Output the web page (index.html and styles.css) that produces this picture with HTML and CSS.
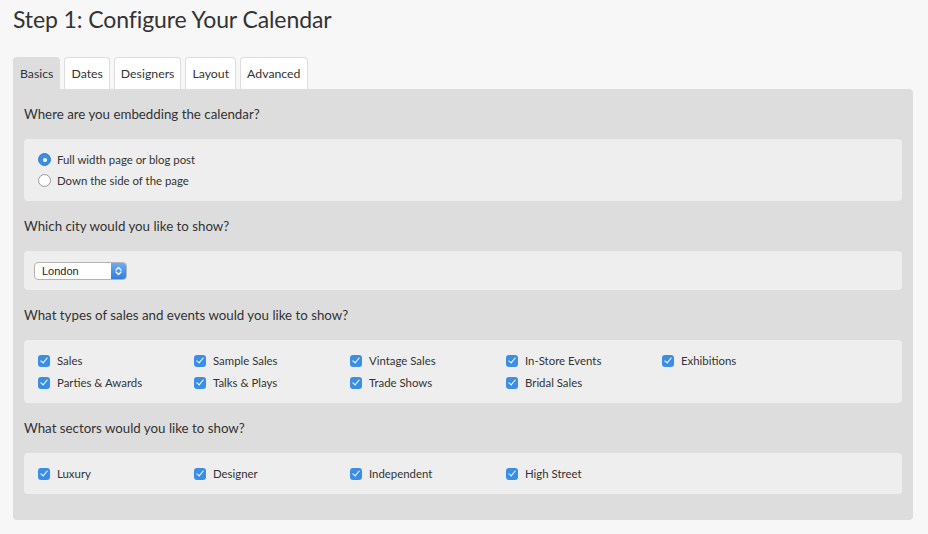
FILE: index.html
```html
<!DOCTYPE html>
<html>
<head>
<meta charset="utf-8">
<link rel="stylesheet" href="styles.css">
</head>
<body>
<div class="page">
  <h1 class="title">Step 1: Configure Your Calendar</h1>
  <ul class="tabs">
    <li class="tab active">Basics</li>
    <li class="tab">Dates</li>
    <li class="tab">Designers</li>
    <li class="tab">Layout</li>
    <li class="tab">Advanced</li>
  </ul>
  <div class="panel">
    <div class="question">Where are you embedding the calendar?</div>
    <div class="box list">
      <label class="opt"><span class="radio on"></span>Full width page or blog post</label>
      <label class="opt"><span class="radio"></span>Down the side of the page</label>
    </div>

    <div class="question">Which city would you like to show?</div>
    <div class="box select-box">
      <div class="select"><span class="select-text">London</span><span class="select-btn"><svg width="9" height="12" viewBox="0 0 9 12"><path d="M2 5 L4.5 2.5 L7 5 M2 7 L4.5 9.5 L7 7" fill="none" stroke="#fff" stroke-width="1.3" stroke-linecap="round" stroke-linejoin="round"/></svg></span></div>
    </div>

    <div class="question">What types of sales and events would you like to show?</div>
    <div class="box grid">
      <label class="opt"><span class="check"></span>Sales</label>
      <label class="opt"><span class="check"></span>Sample Sales</label>
      <label class="opt"><span class="check"></span>Vintage Sales</label>
      <label class="opt"><span class="check"></span>In-Store Events</label>
      <label class="opt"><span class="check"></span>Exhibitions</label>
      <label class="opt"><span class="check"></span>Parties &amp; Awards</label>
      <label class="opt"><span class="check"></span>Talks &amp; Plays</label>
      <label class="opt"><span class="check"></span>Trade Shows</label>
      <label class="opt"><span class="check"></span>Bridal Sales</label>
    </div>

    <div class="question">What sectors would you like to show?</div>
    <div class="box grid">
      <label class="opt"><span class="check"></span>Luxury</label>
      <label class="opt"><span class="check"></span>Designer</label>
      <label class="opt"><span class="check"></span>Independent</label>
      <label class="opt"><span class="check"></span>High Street</label>
    </div>
  </div>
</div>
</body>
</html>
```

FILE: styles.css
```css
* { box-sizing: border-box; }
html, body { margin: 0; padding: 0; background: #f7f7f7; }
body {
  font-family: Lato, "Open Sans", sans-serif;
  color: #333;
}
.page {
  padding: 4px 15px 0 13px;
}
.title {
  margin: 0;
  font-weight: 400;
  font-size: 23px;
  line-height: 30px;
  color: #333;
  letter-spacing: -0.1px;
}
.tabs {
  list-style: none;
  margin: 23px 0 0 0;
  padding: 0;
  display: flex;
  gap: 4px;
}
.tab {
  height: 32px;
  line-height: 31px;
  padding: 0 6px;
  font-size: 12.3px;
  background: #fff;
  border: 1px solid #ddd;
  border-bottom: none;
  border-radius: 4px 4px 0 0;
  color: #333;
}
.tab.active {
  background: #ddd;
  border-color: #ddd;
}
.panel {
  background: #ddd;
  border-radius: 0 4px 4px 4px;
  padding: 14px 11px 26px 11px;
}
.question {
  font-size: 13.3px;
  line-height: 22px;
  color: #333;
  margin-bottom: 14px;
}
.box + .question { margin-top: 14px; }
.box {
  background: #eee;
  border-radius: 4px;
  padding: 10px 14px;
}
.list {
  display: flex;
  flex-direction: column;
}
.grid {
  display: grid;
  grid-template-columns: repeat(5, 156px);
  row-gap: 1px;
}
.opt {
  display: flex;
  align-items: center;
  font-size: 11.4px;
  line-height: 21px;
  color: #333;
}
.radio {
  width: 13px;
  height: 13px;
  border-radius: 50%;
  background: #fff;
  border: 1px solid #9a9a9a;
  margin-right: 6px;
  flex: none;
  display: flex;
  align-items: center;
  justify-content: center;
}
.radio.on {
  background: #3b8ee6;
  border-color: #2f7dd3;
}
.radio.on::after {
  content: "";
  width: 4px;
  height: 4px;
  border-radius: 50%;
  background: #fff;
}
.check {
  width: 12px;
  height: 12px;
  border-radius: 3px;
  background: #3b8ee6;
  margin-right: 7px;
  flex: none;
  position: relative;
}
.check::after {
  content: "";
  position: absolute;
  left: 3.5px;
  top: 1.5px;
  width: 3px;
  height: 6px;
  border: solid #fff;
  border-width: 0 1.5px 1.5px 0;
  transform: rotate(40deg);
}
.select-box {
  padding: 11px 10px 10px 10px;
}
.select {
  display: flex;
  width: 93px;
  height: 18px;
  border: 1px solid #b3b3b3;
  border-radius: 4px;
  background: #fff;
  overflow: hidden;
}
.select-text {
  flex: 1;
  font-family: "Liberation Sans", Arial, sans-serif;
  font-size: 11px;
  line-height: 16px;
  padding-left: 7px;
  color: #222;
}
.select-btn {
  width: 15px;
  background: linear-gradient(#6aaef5, #2f7ee0);
  display: flex;
  align-items: center;
  justify-content: center;
}
```
